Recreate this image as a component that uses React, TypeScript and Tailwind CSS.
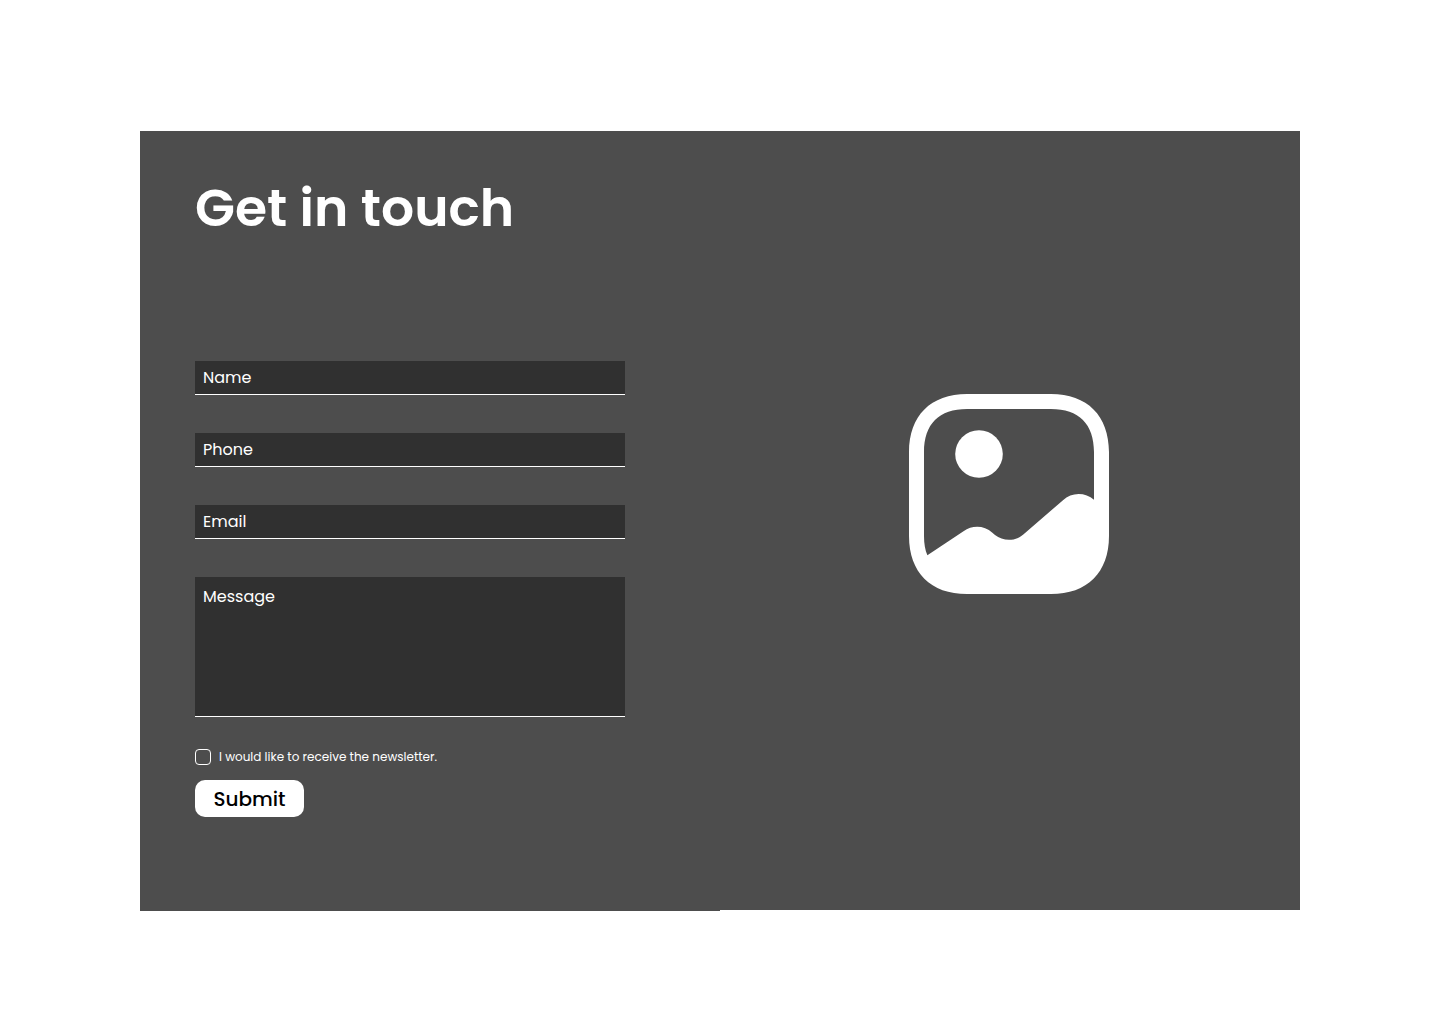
const fieldClass =
  "block w-full rounded-none border-b border-white bg-[#303030] px-2 text-base text-white placeholder:text-white placeholder:opacity-100 outline-none";

const fields = [
  { id: "name", label: "Name", type: "text" },
  { id: "phone", label: "Phone", type: "tel" },
  { id: "email", label: "Email", type: "email" },
];

function PictureIcon() {
  return (
    <svg viewBox="0 0 200 200" className="h-auto w-[200px]" fill="white" role="img" aria-label="Picture">
      <path
        fillRule="evenodd"
        d="M58.1 0H141.9C178.3 0 200 21.7 200 58.1V141.9C200 178.3 178.3 200 141.9 200H58.1C21.7 200 0 178.3 0 141.9V58.1C0 21.7 21.7 0 58.1 0ZM18.4 161.3L54.5 137.2C63.5 131 75 131.3 83.4 138.7L86 141C94 147.5 106.5 147.5 114.3 140.5L154 106.2C162.5 98 176.3 98 185 105.8V58.1C185 30 170 15 141.9 15H58.1C30 15 15 30 15 58.1V141.9C15 149.4 16.1 155.9 18.4 161.3Z"
      />
      <circle cx="70" cy="60" r="23.8" />
    </svg>
  );
}

export default function App() {
  return (
    <main className="min-h-screen bg-white px-5 pt-[131px] pb-[113px] font-[Poppins,Inter,sans-serif]">
      <section className="mx-auto grid max-w-[1160px] grid-cols-2">
        <div className="bg-[#4d4d4d] pt-[41px] pr-[95px] pb-[94px] pl-[55px] text-white">
          <h1 className="text-[52px] leading-[72px] font-semibold whitespace-nowrap">Get in touch</h1>
          <form className="mt-[117px]" onSubmit={(e) => e.preventDefault()}>
            <div className="flex flex-col gap-[38px]">
              {fields.map((field) => (
                <input
                  key={field.id}
                  id={field.id}
                  name={field.id}
                  type={field.type}
                  aria-label={field.label}
                  placeholder={field.label}
                  className={`${fieldClass} h-[34px]`}
                />
              ))}
              <textarea
                name="message"
                aria-label="Message"
                placeholder="Message"
                className={`${fieldClass} h-[140px] resize-none py-2`}
              />
            </div>
            <div className="mt-8 flex h-4 items-center gap-2">
              <input
                id="newsletter"
                type="checkbox"
                className="size-4 appearance-none rounded border border-white checked:bg-white"
              />
              <label htmlFor="newsletter" className="text-xs">
                I would like to receive the newsletter.
              </label>
            </div>
            <button
              type="submit"
              className="mt-[15px] block h-[37px] w-[109px] rounded-[10px] bg-white text-xl font-medium text-black"
            >
              Submit
            </button>
          </form>
        </div>
        <div className="mb-px flex items-center justify-center bg-[#4d4d4d] pr-0.5 pb-[54px]">
          <PictureIcon />
        </div>
      </section>
    </main>
  );
}
